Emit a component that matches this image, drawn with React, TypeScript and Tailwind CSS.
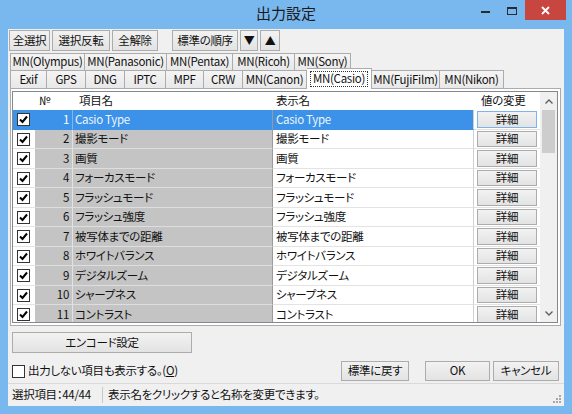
const items = [
  'Casio Type',
  '撮影モード',
  '画質',
  'フォーカスモード',
  'フラッシュモード',
  'フラッシュ強度',
  '被写体までの距離',
  'ホワイトバランス',
  'デジタルズーム',
  'シャープネス',
  'コントラスト',
]

const backTabs: [string, string][] = [
  ['MN(Olympus)', 'w-[75px]'],
  ['MN(Panasonic)', 'w-[82px]'],
  ['MN(Pentax)', 'w-[66px]'],
  ['MN(Ricoh)', 'w-[62px]'],
  ['MN(Sony)', 'w-[56px]'],
]

const frontTabs: [string, string][] = [
  ['Exif', 'w-[37px]'],
  ['GPS', 'w-[39px]'],
  ['DNG', 'w-[39px]'],
  ['IPTC', 'w-[41px]'],
  ['MPF', 'w-[38px]'],
  ['CRW', 'w-[39px]'],
  ['MN(Canon)', 'w-[64px]'],
  ['MN(Casio)', 'w-[65px]'],
  ['MN(FujiFilm)', 'w-[68px]'],
  ['MN(Nikon)', 'w-[64px]'],
]

const rowHeights = ['h-[20px]', 'h-[19px]']

function Button({ label, w, h = 'h-[21px]' }: { label: React.ReactNode; w: string; h?: string }) {
  return (
    <div
      className={`${w} ${h} flex items-center justify-center border border-[#acacac] bg-linear-to-b from-[#f2f2f2] to-[#e3e3e3] leading-none`}
    >
      {label}
    </div>
  )
}

function Check({ on = true }: { on?: boolean }) {
  return (
    <div className="w-[13px] h-[13px] border border-[#333333] bg-white flex items-center justify-center">
      {on && (
        <svg width="11" height="11" viewBox="0 0 11 11">
          <path d="M2 5.5 L4.5 8 L9 2.5" fill="none" stroke="#000" strokeWidth="2" />
        </svg>
      )}
    </div>
  )
}

function Tab({ label, w, first }: { label: string; w: string; first?: boolean }) {
  return (
    <div
      className={`${w} h-full flex items-center justify-center border-t border-r border-[#acacac] bg-linear-to-b from-[#f4f4f4] to-[#e8e8e8] leading-none ${first ? 'border-l' : ''}`}
    >
      {label}
    </div>
  )
}

function Chevron({ up }: { up?: boolean }) {
  return (
    <svg width="8" height="5" viewBox="0 0 8 5">
      <path d={up ? 'M0.5 4.5 L4 1 L7.5 4.5' : 'M0.5 0.5 L4 4 L7.5 0.5'} fill="none" stroke="#606060" strokeWidth="1.4" />
    </svg>
  )
}

export default function App() {
  return (
    <div className="w-[572px] h-[414px] bg-[#79b8ee] flex flex-col font-['Noto_Sans_CJK_JP',sans-serif] text-[11.5px] tracking-[-0.3px] text-[#111] [font-feature-settings:'palt']">
      {/* title bar */}
      <div className="h-[29px] grid grid-cols-[1fr_auto_1fr]">
        <div />
        <div className="pt-[3px] text-[15px] leading-[20px] tracking-normal text-[#1a1a1a]">出力設定</div>
        <div className="flex justify-end items-start mr-[6px]">
          <div className="w-[27px] h-[20px] flex justify-center pt-[11px]">
            <div className="w-[9px] h-[2px] bg-[#2b2b2b]" />
          </div>
          <div className="w-[26px] h-[20px] flex justify-center pt-[7px]">
            <div className="w-[10px] h-[8px] border border-t-2 border-[#2b2b2b]" />
          </div>
          <div className="w-[41px] h-[20px] bg-[#c7463f] flex items-center justify-center">
            <svg width="9" height="9" viewBox="0 0 9 9">
              <path d="M1 1 L8 8 M8 1 L1 8" stroke="#fff" strokeWidth="1.8" />
            </svg>
          </div>
        </div>
      </div>

      {/* client */}
      <div className="mx-[8px] mb-[8px] flex-1 bg-[#f0f0f0] flex flex-col">
        {/* toolbar */}
        <div className="mt-[1px] ml-[1px] flex h-[21px]">
          <div className="flex gap-[2px]">
            <Button label="全選択" w="w-[41px]" />
            <Button label="選択反転" w="w-[58px]" />
            <Button label="全解除" w="w-[46px]" />
          </div>
          <div className="flex gap-[2px] ml-[14px]">
            <Button label="標準の順序" w="w-[66px]" />
            <Button label={<span className="text-[11px]">▼</span>} w="w-[18px]" />
            <Button label={<span className="text-[11px]">▲</span>} w="w-[20px]" />
          </div>
        </div>

        {/* tabs */}
        <div className="mt-[2px] ml-[2px] flex h-[17px]">
          {backTabs.map(([l, w], i) => (
            <Tab key={l} label={l} w={w} first={i === 0} />
          ))}
        </div>
        <div className="ml-[2px] flex items-end h-[18px]">
          {frontTabs.map(([l, w], i) =>
            l === 'MN(Casio)' ? (
              <div
                key={l}
                className={`${w} h-[21px] -mb-[1px] relative z-10 bg-white border-t border-r border-[#acacac] flex items-center justify-center leading-none`}
              >
                <span className="border border-dotted border-[#333] px-[2px] py-[1px]">{l}</span>
              </div>
            ) : (
              <Tab key={l} label={l} w={w} first={i === 0} />
            ),
          )}
        </div>

        {/* tab panel */}
        <div className="ml-[2px] w-[551px] h-[238px] border border-[#acacac] bg-white pl-[1px] pr-[2px] pt-[2px] pb-[2px] flex">
          <div className="flex-1 border border-[#828790] flex overflow-hidden">
            <div className="w-[527px] flex flex-col overflow-hidden">
              <div className="h-[18px] flex items-center leading-none shrink-0">
                <div className="w-[22px]" />
                <div className="w-[38px] pl-[4px]">№</div>
                <div className="w-[200px] pl-[6px]">項目名</div>
                <div className="w-[201px] pl-[3px]">表示名</div>
                <div className="w-[66px] pl-[7px]">値の変更</div>
              </div>
              {items.map((name, i) => {
                const sel = i === 0
                return (
                  <div key={i} className={`${rowHeights[i % 2]} shrink-0 flex leading-none`}>
                    <div
                      className={`w-[22px] pl-[4px] flex items-center border-b ${sel ? 'bg-[#3b92e8] border-[#3b92e8]' : 'bg-white border-[#e3e3e3]'}`}
                    >
                      <Check />
                    </div>
                    <div
                      className={`w-[38px] pr-[3px] flex items-center justify-end border-r border-b ${sel ? 'bg-[#3b92e8] text-white border-r-[#7fb8ee] border-b-[#3b92e8]' : 'bg-[#c4c4c4] border-r-[#e2e2e2] border-b-[#dedede]'}`}
                    >
                      {i + 1}
                    </div>
                    <div
                      className={`w-[200px] pl-[2px] flex items-center border-r border-b ${sel ? 'bg-[#3b92e8] text-[#eef6ff] border-r-[#9a9a9a] border-b-[#3b92e8]' : 'bg-[#c4c4c4] border-r-[#9a9a9a] border-b-[#dedede]'}`}
                    >
                      {name}
                    </div>
                    <div
                      className={`w-[201px] pl-[3px] flex items-center border-r border-b ${sel ? 'bg-[#3b92e8] text-[#eef6ff] border-r-[#d0d0d0] border-b-[#3b92e8]' : 'bg-white border-r-[#d0d0d0] border-b-[#e3e3e3]'}`}
                    >
                      {name}
                    </div>
                    <div className="w-[66px] bg-white px-[3px] py-[1px] flex border-b border-[#e3e3e3]">
                      <div
                        className={`flex-1 flex items-center justify-center border bg-linear-to-b from-[#f2f2f2] to-[#e3e3e3] ${sel ? 'border-[#7eb4ea]' : 'border-[#acacac]'}`}
                      >
                        詳細
                      </div>
                    </div>
                  </div>
                )
              })}
            </div>
            {/* scrollbar */}
            <div className="w-[17px] bg-[#f0f0f0] flex flex-col">
              <div className="h-[18px] flex items-center justify-center">
                <Chevron up />
              </div>
              <div className="h-[43px] mx-[2px] bg-[#cdcdcd]" />
              <div className="flex-1" />
              <div className="h-[17px] flex items-center justify-center">
                <Chevron />
              </div>
            </div>
          </div>
        </div>

        {/* lower area */}
        <div className="mt-[6px] ml-[4px]">
          <Button label="エンコード設定" w="w-[180px]" />
        </div>
        <div className="mt-[8px] h-[20px] flex items-center justify-between pl-[4px] pr-[5px]">
          <div className="flex items-center gap-[3px] leading-none">
            <Check on={false} />
            <span>
              出力しない項目も表示する。(<span className="underline">O</span>)
            </span>
          </div>
          <div className="flex">
            <Button label="標準に戻す" w="w-[68px]" h="h-[20px]" />
            <div className="ml-[16px]">
              <Button label="OK" w="w-[65px]" h="h-[20px]" />
            </div>
            <div className="ml-[3px]">
              <Button label="キャンセル" w="w-[66px]" h="h-[20px]" />
            </div>
          </div>
        </div>

        {/* status bar */}
        <div className="mt-[2px] flex-1 border-t border-[#d9d9d9] flex items-center leading-none">
          <div className="w-[95px] pl-[4px] border-r border-[#c8c8c8] h-[16px] flex items-center">選択項目：44/44</div>
          <div className="pl-[5px] flex-1">表示名をクリックすると名称を変更できます。</div>
          <div className="self-end mb-[3px] mr-[3px]">
            <svg width="9" height="9" viewBox="0 0 9 9" fill="#a8a8a8">
              <rect x="7" y="1" width="2" height="2" />
              <rect x="4" y="4" width="2" height="2" />
              <rect x="7" y="4" width="2" height="2" />
              <rect x="1" y="7" width="2" height="2" />
              <rect x="4" y="7" width="2" height="2" />
              <rect x="7" y="7" width="2" height="2" />
            </svg>
          </div>
        </div>
      </div>
    </div>
  )
}
